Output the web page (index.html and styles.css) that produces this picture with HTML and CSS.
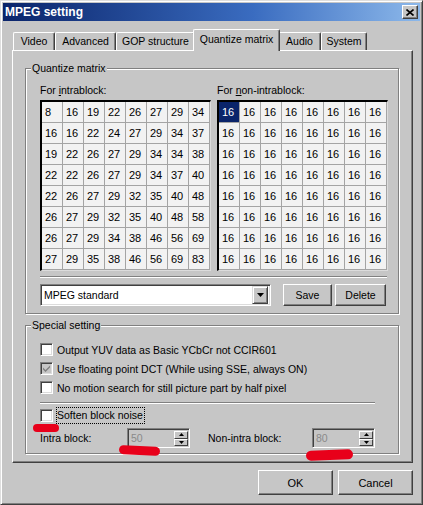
FILE: index.html
```html
<!DOCTYPE html>
<html lang="en">
<head>
    <meta charset="UTF-8">
    <title>MPEG setting</title>
    <link rel="stylesheet" href="styles.css">
</head>
<body>
    <div class="window">
        <div class="titlebar">
            <span class="title">MPEG setting</span>
            <span class="close-btn">
                <svg width="8" height="7" viewBox="0 0 8 7"><path d="M0.5 0.5 L7.5 6.5 M7.5 0.5 L0.5 6.5" stroke="#000" stroke-width="1.6"/></svg>
            </span>
        </div>

        <div class="tabs">
            <div class="tab tab-video">Video</div>
            <div class="tab tab-advanced">Advanced</div>
            <div class="tab tab-gop">GOP structure</div>
            <div class="tab tab-quant active">Quantize matrix</div>
            <div class="tab tab-audio">Audio</div>
            <div class="tab tab-system">System</div>
        </div>

        <div class="panel">
            <!-- Quantize matrix -->
            <div class="group group-quant">
                <div class="group-title">Quantize matrix</div>
                <div class="matrix-row">
                    <div class="matrix">
                        <div class="matrix-label">For <u>i</u>ntrablock:</div>
                        <div class="grid" id="intra-grid"></div>
                    </div>
                    <div class="matrix">
                        <div class="matrix-label">For <u>n</u>on-intrablock:</div>
                        <div class="grid" id="nonintra-grid"></div>
                    </div>
                </div>
                <div class="sep sep-wide"></div>
                <div class="preset-row">
                    <div class="combo">
                        <span class="combo-text">MPEG standard</span>
                        <span class="combo-btn">
                            <svg width="7" height="4" viewBox="0 0 7 4"><path d="M0 0 H7 L3.5 4 Z" fill="#000"/></svg>
                        </span>
                    </div>
                    <div class="btn btn-save">Save</div>
                    <div class="btn btn-delete">Delete</div>
                </div>
            </div>

            <!-- Special setting -->
            <div class="group group-special">
                <div class="group-title">Special setting</div>
                <div class="check-row first">
                    <span class="checkbox"></span>
                    <span>Output YUV data as Basic YCbCr not CCIR601</span>
                </div>
                <div class="check-row">
                    <span class="checkbox disabled">
                        <svg width="7" height="7" viewBox="0 0 7 7"><path d="M0 2.5 L0 4.5 L2.5 7 L7 2.5 L7 0.5 L2.5 5 Z" fill="#808080"/></svg>
                    </span>
                    <span>Use floating point DCT (While using SSE, always ON)</span>
                </div>
                <div class="check-row">
                    <span class="checkbox"></span>
                    <span>No motion search for still picture part by half pixel</span>
                </div>
                <div class="sep sep-short"></div>
                <div class="check-row soften">
                    <span class="checkbox"></span>
                    <span class="focus-label">Soften block noise</span>
                </div>
                <div class="spin-row">
                    <span class="spin-label intra">Intra block:</span>
                    <div class="spin">
                        <span class="spin-value">50</span>
                        <span class="spin-btns">
                            <span class="spin-btn"><svg width="5" height="3" viewBox="0 0 5 3"><path d="M0 3 H5 L2.5 0 Z" fill="#000"/></svg></span>
                            <span class="spin-btn"><svg width="5" height="3" viewBox="0 0 5 3"><path d="M0 0 H5 L2.5 3 Z" fill="#000"/></svg></span>
                        </span>
                    </div>
                    <span class="spin-label nonintra">Non-intra block:</span>
                    <div class="spin">
                        <span class="spin-value">80</span>
                        <span class="spin-btns">
                            <span class="spin-btn"><svg width="5" height="3" viewBox="0 0 5 3"><path d="M0 3 H5 L2.5 0 Z" fill="#000"/></svg></span>
                            <span class="spin-btn"><svg width="5" height="3" viewBox="0 0 5 3"><path d="M0 0 H5 L2.5 3 Z" fill="#000"/></svg></span>
                        </span>
                    </div>
                </div>
            </div>
        </div>

        <div class="footer">
            <div class="btn btn-dialog">OK</div>
            <div class="btn btn-dialog">Cancel</div>
        </div>

        <!-- red pen marks on the screenshot -->
        <span class="mark mark-1"></span>
        <span class="mark mark-2"></span>
        <span class="mark mark-3"></span>
    </div>

    <script>
        const intra = [
            [8, 16, 19, 22, 26, 27, 29, 34],
            [16, 16, 22, 24, 27, 29, 34, 37],
            [19, 22, 26, 27, 29, 34, 34, 38],
            [22, 22, 26, 27, 29, 34, 37, 40],
            [22, 26, 27, 29, 32, 35, 40, 48],
            [26, 27, 29, 32, 35, 40, 48, 58],
            [26, 27, 29, 34, 38, 46, 56, 69],
            [27, 29, 35, 38, 46, 56, 69, 83]
        ];

        function fillGrid(id, values, selectFirst) {
            const grid = document.getElementById(id);
            values.forEach((row, r) => {
                row.forEach((value, c) => {
                    const cell = document.createElement('div');
                    cell.className = 'cell';
                    if (selectFirst && r === 0 && c === 0) {
                        cell.className += ' selected';
                    }
                    cell.textContent = value;
                    grid.appendChild(cell);
                });
            });
        }

        const nonIntra = intra.map(row => row.map(() => 16));

        fillGrid('intra-grid', intra, false);
        fillGrid('nonintra-grid', nonIntra, true);
    </script>
</body>
</html>
```

FILE: styles.css
```css
body {
    margin: 0;
    font-family: "Liberation Sans", Arial, sans-serif;
    font-size: 10.5px;
    color: #000;
    background: #c6c6c6;
}

.window {
    position: relative;
    width: 423px;
    height: 505px;
    box-sizing: border-box;
    padding: 2px;
    background: #c6c6c6;
    border: 1px solid;
    border-color: #dedede #404040 #404040 #dedede;
    box-shadow: inset 1px 1px #fff, inset -1px -1px #808080;
}

/* Title bar */
.titlebar {
    height: 18px;
    display: flex;
    align-items: center;
    justify-content: space-between;
    padding: 0 2px;
    background: linear-gradient(to right, #0a246a, #3a6cc0 60%, #8cb8ea);
    color: #fff;
}

.title {
    font-size: 12px;
    font-weight: bold;
}

.close-btn {
    width: 16px;
    height: 14px;
    box-sizing: border-box;
    display: flex;
    align-items: center;
    justify-content: center;
    background: #c6c6c6;
    border: 1px solid;
    border-color: #fff #404040 #404040 #fff;
    box-shadow: inset -1px -1px #808080;
}

/* Tabs */
.tabs {
    display: flex;
    align-items: flex-end;
    height: 21px;
    margin-top: 8px;
    padding-left: 10px;
}

.tab {
    height: 18px;
    box-sizing: border-box;
    display: flex;
    align-items: center;
    justify-content: center;
    border: 1px solid;
    border-bottom: none;
    border-color: #fff #404040 #404040 #fff;
    box-shadow: inset -1px 0 #808080;
    border-radius: 2px 2px 0 0;
    padding-bottom: 1px;
}

.tab-video { width: 42px; }
.tab-advanced { width: 61px; }
.tab-gop { width: 79px; }
.tab-audio { width: 43px; }
.tab-system { width: 46px; }

.tab.active {
    position: relative;
    z-index: 1;
    width: 87px;
    height: 22px;
    margin: 0 -2px -1px;
    padding-bottom: 3px;
    background: #c6c6c6;
}

/* Tab page */
.panel {
    margin-left: 9px;
    width: 401px;
    height: 413px;
    box-sizing: border-box;
    padding: 17px 0 0 12px;
    border: 1px solid;
    border-color: #fff #404040 #404040 #fff;
    box-shadow: inset -1px -1px #808080;
}

.group {
    width: 374px;
    box-sizing: border-box;
    border: 1px solid #808080;
    box-shadow: inset 1px 1px #fff, 1px 1px #fff;
    padding: 0 10px 0 14px;
}

.group-title {
    width: fit-content;
    margin: -7px 0 0 -9px;
    padding: 0 1px;
    line-height: 13px;
    background: #c6c6c6;
}

.group-quant {
    height: 246px;
}

.group-special {
    height: 129px;
    margin-top: 11px;
}

/* Matrices */
.matrix-row {
    display: flex;
    gap: 6px;
    margin-top: 9px;
}

.matrix-label {
    line-height: 13px;
    margin-bottom: 3px;
}

.grid {
    display: grid;
    grid-template-columns: repeat(8, 20px);
    grid-template-rows: repeat(8, 20px);
    gap: 1px;
    padding-right: 1px;
    padding-bottom: 1px;
    background: #a4a4a4;
    border: 2px solid;
    border-color: #000 #dcdcdc #dcdcdc #000;
    border-right-width: 1px;
    border-bottom-width: 1px;
}

.cell {
    background: #f2f2f2;
    line-height: 20px;
    padding-left: 3px;
    font-size: 11px;
}

.cell.selected {
    background: #0a246a;
    color: #fff;
}

.sep {
    height: 0;
    border-top: 1px solid #808080;
    border-bottom: 1px solid #fff;
}

.sep-wide {
    width: 347px;
    margin-top: 5px;
}

.sep-short {
    width: 335px;
    margin-top: 5px;
}

/* Preset row */
.preset-row {
    display: flex;
    align-items: center;
    margin-top: 6px;
}

.combo {
    width: 231px;
    height: 22px;
    box-sizing: border-box;
    display: flex;
    align-items: center;
    justify-content: space-between;
    background: #fff;
    border: 1px solid;
    border-color: #808080 #fff #fff #808080;
    box-shadow: inset 1px 1px #404040, inset -1px -1px #dcdcdc;
    padding: 2px 2px 2px 3px;
}

.combo-btn {
    width: 16px;
    height: 18px;
    box-sizing: border-box;
    display: flex;
    align-items: center;
    justify-content: center;
    background: #c6c6c6;
    border: 1px solid;
    border-color: #dcdcdc #404040 #404040 #dcdcdc;
    box-shadow: inset 1px 1px #fff, inset -1px -1px #808080;
}

.btn {
    height: 22px;
    box-sizing: border-box;
    display: flex;
    align-items: center;
    justify-content: center;
    border: 1px solid;
    border-color: #fff #404040 #404040 #fff;
    box-shadow: inset -1px -1px #808080;
}

.btn-save {
    width: 49px;
    margin-left: 12px;
}

.btn-delete {
    width: 51px;
    margin-left: 3px;
}

/* Checkboxes */
.check-row {
    display: flex;
    align-items: center;
    height: 19px;
}

.check-row.first {
    margin-top: 8px;
}

.check-row.soften {
    margin-top: 2px;
}

.checkbox {
    width: 13px;
    height: 13px;
    box-sizing: border-box;
    display: flex;
    align-items: center;
    justify-content: center;
    margin-right: 4px;
    background: #fff;
    border: 1px solid;
    border-color: #808080 #fff #fff #808080;
    box-shadow: inset 1px 1px #404040, inset -1px -1px #dcdcdc;
}

.checkbox.disabled {
    background: #c6c6c6;
}

.soften .checkbox {
    margin-right: 3px;
}

.focus-label {
    border: 1px dotted #000;
    line-height: 15px;
    padding-right: 1px;
}

/* Spin boxes */
.spin-row {
    display: flex;
    align-items: center;
    margin-top: 3px;
    height: 20px;
}

.spin-label.intra { width: 87px; }

.spin-label.nonintra {
    width: 104px;
    margin-left: 18px;
}

.spin {
    width: 63px;
    height: 20px;
    box-sizing: border-box;
    display: flex;
    justify-content: space-between;
    border: 1px solid;
    border-color: #808080 #fff #fff #808080;
    box-shadow: inset 1px 1px #404040;
    padding: 2px 1px 1px 3px;
}

.spin-value {
    color: #8a8a8a;
    line-height: 15px;
}

.spin-btns {
    width: 14px;
    display: flex;
    flex-direction: column;
}

.spin-btn {
    flex: 1;
    display: flex;
    align-items: center;
    justify-content: center;
    border: 1px solid;
    border-color: #fff #404040 #404040 #fff;
}

/* Dialog buttons */
.footer {
    display: flex;
    justify-content: flex-end;
    gap: 5px;
    width: 410px;
    margin-top: 7px;
}

.btn-dialog {
    width: 75px;
    height: 25px;
    font-size: 11px;
}

/* Red pen marks */
.mark {
    position: absolute;
    background: #e8001a;
    border-radius: 5px;
}

.mark-1 { left: 32px; top: 423px; width: 26px; height: 8px; }
.mark-2 { left: 118px; top: 445px; width: 41px; height: 9px; transform: rotate(3deg); }
.mark-3 { left: 305px; top: 449px; width: 47px; height: 10px; transform: rotate(-2deg); }
```
